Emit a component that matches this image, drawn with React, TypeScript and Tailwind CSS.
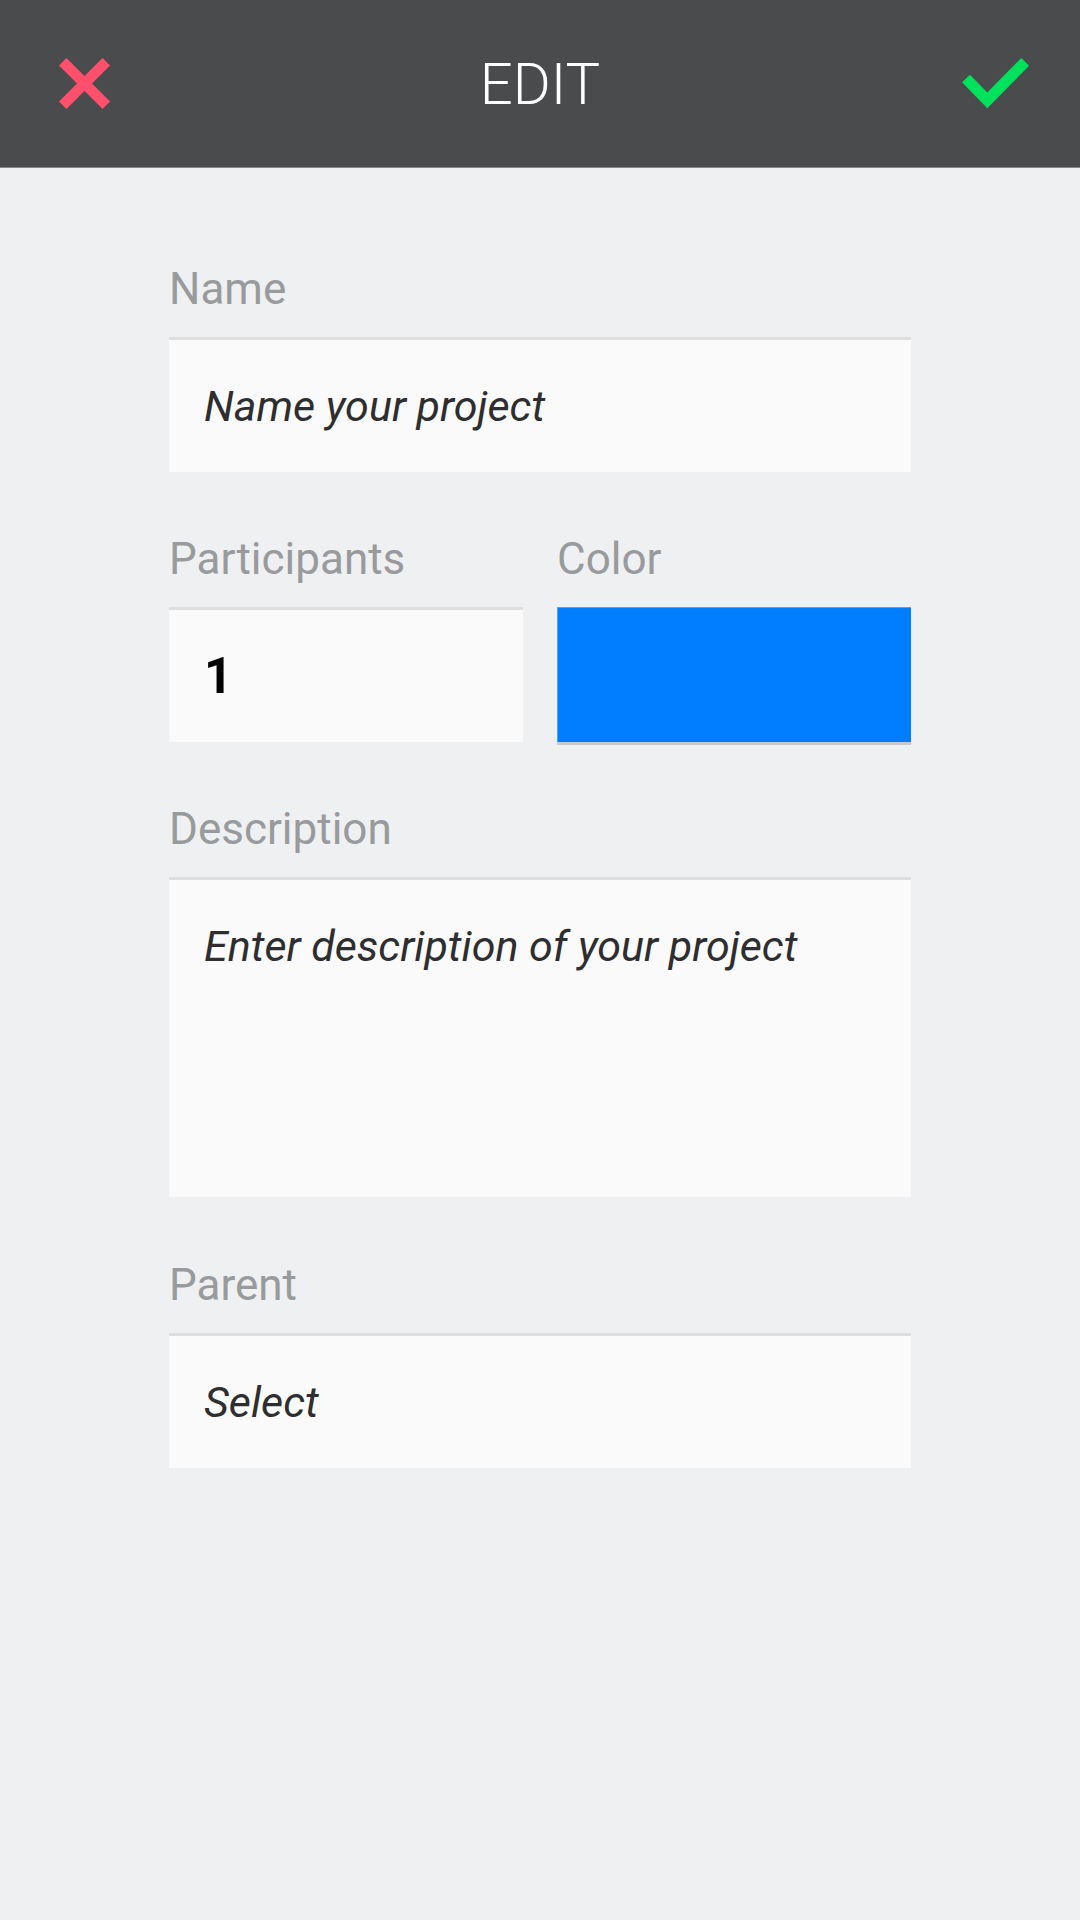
import React from "react";

const labelCls =
  "block text-[44px] leading-[50px] text-[#999a9c] mb-[23px] whitespace-nowrap";
const fieldCls =
  "bg-[#fafafa] border-t-[3px] border-[#dedede] pl-[35px] text-[43px] leading-[52px] italic text-[#2e2e30]";

export default function App() {
  return (
    <div
      className="w-[1080px] h-[1920px] bg-[#eff0f2]"
      style={{ fontFamily: "Roboto, 'Noto Sans', sans-serif" }}
    >
      <header className="h-[168px] bg-[#4a4b4d] border-b border-[#85868a] grid grid-cols-[1fr_auto_1fr] items-center">
        <div className="flex justify-start pl-[59px]">
          <svg width="51" height="51" viewBox="0 0 51 51">
            <g stroke="#fe4f6c" strokeWidth="10.5" strokeLinecap="butt">
              <line x1="3.7" y1="3.7" x2="47.3" y2="47.3" />
              <line x1="47.3" y1="3.7" x2="3.7" y2="47.3" />
            </g>
          </svg>
        </div>
        <h1 className="text-[58px] leading-none font-light text-white tracking-normal">
          EDIT
        </h1>
        <div className="flex justify-end pr-[45px]">
          <svg width="80" height="60" viewBox="0 0 80 60">
            <polyline
              points="11,24.5 32.3,46.3 70.2,7.8"
              fill="none"
              stroke="#00e25b"
              strokeWidth="11"
              strokeLinecap="butt"
              strokeLinejoin="miter"
            />
          </svg>
        </div>
      </header>

      <main className="px-[169px] pt-[96px] flex flex-col">
        <section>
          <label className={labelCls}>Name</label>
          <div className={`${fieldCls} h-[135px] flex items-center`}>
            Name your project
          </div>
        </section>

        <section className="mt-[62px] grid grid-cols-2 gap-x-[34px]">
          <div>
            <label className={labelCls}>Participants</label>
            <div className="h-[135px] bg-[#fafafa] border-t-[3px] border-[#dedede] pl-[35px] flex items-center text-[50px] leading-[52px] font-bold text-black">
              1
            </div>
          </div>
          <div>
            <label className={labelCls}>Color</label>
            <div className="h-[138px] flex flex-col">
              <div className="flex-1 bg-[#007eff] border-t border-l border-[#4fa3ff]" />
              <div className="h-[3px] bg-[#c8c9cb]" />
            </div>
          </div>
        </section>

        <section className="mt-[59px]">
          <label className={labelCls}>Description</label>
          <div className={`${fieldCls} h-[320px] pt-[40px]`}>
            Enter description of your project
          </div>
        </section>

        <section className="mt-[63px]">
          <label className={labelCls}>Parent</label>
          <div className={`${fieldCls} h-[135px] flex items-center`}>
            Select
          </div>
        </section>
      </main>
    </div>
  );
}
